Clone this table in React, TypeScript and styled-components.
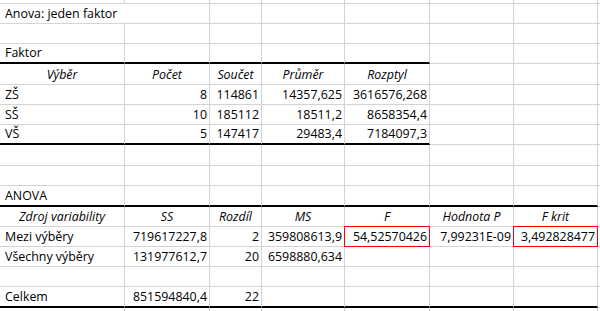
import styled, { createGlobalStyle } from "styled-components"

const GlobalStyle = createGlobalStyle`
    html, body {
        margin: 0;
        padding: 0;
        background: #ffffff;
    }
    body {
        width: 600px;
        height: 311px;
        overflow: hidden;
    }
`

type Align = "left" | "right" | "center"

type CellData = {
    text?: string
    align?: Align
    italic?: boolean
    span?: number
    red?: boolean
}

type RowData = {
    height: number
    thick?: number
    cells: CellData[]
}

const COLS = "125px 85px 52px 83px 85px 84px 84px 1fr"

const L = (text: string): CellData => ({ text, align: "left" })
const R = (text: string): CellData => ({ text, align: "right" })
const H = (text: string): CellData => ({ text, align: "center", italic: true })

const rows: RowData[] = [
    { height: 4, cells: [] },
    { height: 20, cells: [{ text: "Anova: jeden faktor", align: "left", span: 2 }] },
    { height: 20, cells: [] },
    { height: 20, thick: 5, cells: [L("Faktor")] },
    { height: 21, cells: [H("Výběr"), H("Počet"), H("Součet"), H("Průměr"), H("Rozptyl")] },
    { height: 20, cells: [L("ZŠ"), R("8"), R("114861"), R("14357,625"), R("3616576,268")] },
    { height: 20, cells: [L("SŠ"), R("10"), R("185112"), R("18511,2"), R("8658354,4")] },
    { height: 20, thick: 5, cells: [L("VŠ"), R("5"), R("147417"), R("29483,4"), R("7184097,3")] },
    { height: 21, cells: [] },
    { height: 20, cells: [] },
    { height: 21, thick: 7, cells: [L("ANOVA")] },
    {
        height: 20,
        cells: [H("Zdroj variability"), H("SS"), H("Rozdíl"), H("MS"), H("F"), H("Hodnota P"), H("F krit")],
    },
    {
        height: 20,
        cells: [
            L("Mezi výběry"),
            R("719617227,8"),
            R("2"),
            R("359808613,9"),
            { ...R("54,52570426"), red: true },
            R("7,99231E-09"),
            { ...R("3,492828477"), red: true },
        ],
    },
    { height: 20, cells: [L("Všechny výběry"), R("131977612,7"), R("20"), R("6598880,634")] },
    { height: 20, cells: [] },
    { height: 21, thick: 7, cells: [L("Celkem"), R("851594840,4"), R("22")] },
    { height: 20, cells: [] },
]

export default function App() {
    return (
        <>
            <GlobalStyle />
            <Sheet>
                {rows.map((row, r) => {
                    const cells: CellData[] = [...row.cells]
                    let used = row.cells.reduce((n, c) => n + (c.span ?? 1), 0)
                    while (used < 8) {
                        cells.push({})
                        used++
                    }
                    let col = 0
                    return (
                        <Row key={r} h={row.height}>
                            {cells.map((c, i) => {
                                const thick = (row.thick ?? 0) > col
                                col += c.span ?? 1
                                return (
                                    <Cell
                                        key={i}
                                        align={c.align ?? "left"}
                                        italic={c.italic}
                                        thick={thick}
                                        red={c.red}
                                        span={c.span ?? 1}
                                    >
                                        {c.text}
                                    </Cell>
                                )
                            })}
                        </Row>
                    )
                })}
            </Sheet>
        </>
    )
}

const Sheet = styled.div`
    display: flex;
    flex-direction: column;
    width: 600px;
    height: 311px;
    overflow: hidden;
    font-family: "Open Sans", "Liberation Sans", sans-serif;
    font-size: 12.4px;
    font-weight: 500;
    color: #000000;
`

const Row = styled.div<{ h: number }>`
    display: grid;
    grid-template-columns: ${COLS};
    height: ${props => props.h}px;
    flex-shrink: 0;
`

const Cell = styled.div<{ align: Align; italic?: boolean; thick?: boolean; red?: boolean; span: number }>`
    grid-column: span ${props => props.span};
    position: relative;
    box-sizing: border-box;
    display: flex;
    align-items: flex-end;
    justify-content: ${props =>
        props.align === "right" ? "flex-end" : props.align === "center" ? "center" : "flex-start"};
    padding: 0 ${props => (props.align === "right" ? 2 : 0)}px 1px ${props => (props.align === "left" ? 5 : 0)}px;
    border-right: 1px solid #d4d4d4;
    border-bottom: ${props => (props.thick ? "2px solid #000000" : "1px solid #d4d4d4")};
    font-style: ${props => (props.italic ? "italic" : "normal")};
    line-height: 17px;
    white-space: nowrap;

    ${props =>
        props.red &&
        `
        &::after {
            content: "";
            position: absolute;
            top: -1px;
            left: -1px;
            right: -1px;
            bottom: -1px;
            border: 1px solid #ff0000;
            pointer-events: none;
        }
    `}
`
